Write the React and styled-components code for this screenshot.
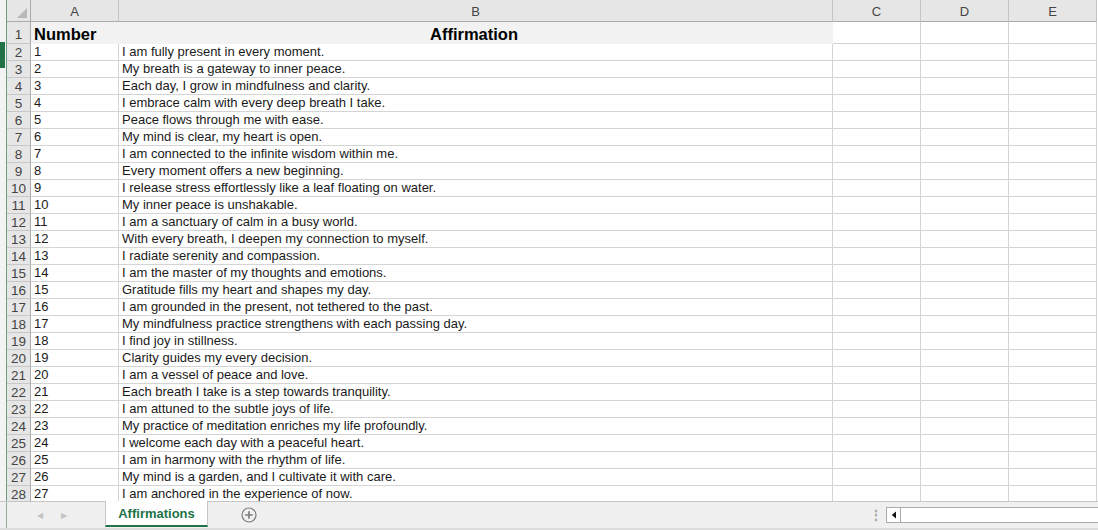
import styled, { createGlobalStyle } from 'styled-components';

const AFFIRMATIONS = [
  'I am fully present in every moment.',
  'My breath is a gateway to inner peace.',
  'Each day, I grow in mindfulness and clarity.',
  'I embrace calm with every deep breath I take.',
  'Peace flows through me with ease.',
  'My mind is clear, my heart is open.',
  'I am connected to the infinite wisdom within me.',
  'Every moment offers a new beginning.',
  'I release stress effortlessly like a leaf floating on water.',
  'My inner peace is unshakable.',
  'I am a sanctuary of calm in a busy world.',
  'With every breath, I deepen my connection to myself.',
  'I radiate serenity and compassion.',
  'I am the master of my thoughts and emotions.',
  'Gratitude fills my heart and shapes my day.',
  'I am grounded in the present, not tethered to the past.',
  'My mindfulness practice strengthens with each passing day.',
  'I find joy in stillness.',
  'Clarity guides my every decision.',
  'I am a vessel of peace and love.',
  'Each breath I take is a step towards tranquility.',
  'I am attuned to the subtle joys of life.',
  'My practice of meditation enriches my life profoundly.',
  'I welcome each day with a peaceful heart.',
  'I am in harmony with the rhythm of life.',
  'My mind is a garden, and I cultivate it with care.',
  'I am anchored in the experience of now.',
];

const COLUMNS = ['A', 'B', 'C', 'D', 'E'];
const GRID_COLUMNS = '24px 88px 714px 88px 88px 88px';

const GlobalStyle = createGlobalStyle`
  html, body {
    margin: 0;
    padding: 0;
    background: #ffffff;
    overflow: hidden;
  }
  body {
    font-family: 'Liberation Sans', Arial, sans-serif;
  }
`;

function App() {
  return (
    <>
      <GlobalStyle />
      <Window>
        <Body>
          <Strip>
            <StripBlock />
          </Strip>
          <Sheet>
            <Corner>
              <CornerTriangle />
            </Corner>
            {COLUMNS.map((letter) => (
              <ColumnHeader key={letter}>{letter}</ColumnHeader>
            ))}

            <RowHeader $tall>1</RowHeader>
            <Cell $tall $filled>
              <Title>Number</Title>
            </Cell>
            <Cell $tall $filled $center>
              <Title>Affirmation</Title>
            </Cell>
            <Cell $tall />
            <Cell $tall />
            <Cell $tall />

            {AFFIRMATIONS.map((text, i) => (
              <Row key={text}>
                <RowHeader>{i + 2}</RowHeader>
                <Cell>{i + 1}</Cell>
                <Cell>{text}</Cell>
                <Cell />
                <Cell />
                <Cell />
              </Row>
            ))}
          </Sheet>
        </Body>

        <TabBar>
          <TabStrip />
          <NavArrows>
            <Arrow>◀</Arrow>
            <Arrow>▶</Arrow>
          </NavArrows>
          <Tab>Affirmations</Tab>
          <AddSheet>
            <svg width="16" height="16" viewBox="0 0 16 16">
              <circle cx="8" cy="8" r="7" fill="none" stroke="#7a7a7a" strokeWidth="1.2" />
              <path d="M8 4.2v7.6M4.2 8h7.6" stroke="#7a7a7a" strokeWidth="1.6" />
            </svg>
          </AddSheet>
          <Spacer />
          <Grip>⋮</Grip>
          <HScroll>
            <ScrollButton>
              <svg width="6" height="8" viewBox="0 0 6 8">
                <path d="M5 0.5v7L0.8 4z" fill="#111" />
              </svg>
            </ScrollButton>
          </HScroll>
        </TabBar>
      </Window>
    </>
  );
}

const Window = styled.div`
  display: flex;
  flex-direction: column;
  width: 1098px;
  height: 530px;
  overflow: hidden;
`;

const Body = styled.div`
  display: flex;
  height: 501px;
  overflow: hidden;
`;

const Strip = styled.div`
  display: flex;
  flex-direction: column;
  width: 6px;
  flex-shrink: 0;
  padding-top: 42px;
  background: #f3f3f3;
  border-right: 1px solid #6f9c80;
`;

const StripBlock = styled.div`
  width: 5px;
  height: 26px;
  background: #217346;
`;

const Sheet = styled.div`
  display: grid;
  grid-template-columns: ${GRID_COLUMNS};
  grid-auto-rows: 17px;
  grid-template-rows: 22px 22px;
  align-content: start;
`;

const Row = styled.div`
  display: contents;
`;

const HeaderBase = styled.div`
  box-sizing: border-box;
  display: flex;
  align-items: center;
  justify-content: center;
  background: #e6e6e6;
  color: #444444;
  font-size: 13px;
`;

const Corner = styled(HeaderBase)`
  position: relative;
  border-right: 1px solid #ababab;
  border-bottom: 1px solid #ababab;
`;

const CornerTriangle = styled.div`
  position: absolute;
  right: 3px;
  bottom: 3px;
  width: 0;
  height: 0;
  border-left: 10px solid transparent;
  border-bottom: 10px solid #b8b8b8;
`;

const ColumnHeader = styled(HeaderBase)`
  border-right: 1px solid #c4c4c4;
  border-bottom: 1px solid #ababab;
  padding-top: 1px;
`;

const RowHeader = styled(HeaderBase)`
  border-right: 1px solid #ababab;
  border-bottom: 1px solid #c8c8c8;
  height: ${(p) => (p.$tall ? 22 : 17)}px;
  font-size: 13.5px;
  padding-top: ${(p) => (p.$tall ? 3 : 1)}px;
`;

const Cell = styled.div`
  box-sizing: border-box;
  display: flex;
  align-items: ${(p) => (p.$tall ? 'center' : 'flex-end')};
  justify-content: ${(p) => (p.$center ? 'center' : 'flex-start')};
  height: ${(p) => (p.$tall ? 22 : 17)}px;
  padding: 0 3px 0 ${(p) => (p.$center ? 0 : 3)}px;
  border-right: 1px solid #d4d4d4;
  border-bottom: 1px solid #d4d4d4;
  background: ${(p) => (p.$filled ? '#f2f2f2' : '#ffffff')};
  ${(p) => p.$filled && 'border-right-color: #f2f2f2; border-bottom-color: #f2f2f2;'}
  color: #1a1a1a;
  font-size: 13px;
  line-height: 16px;
  white-space: nowrap;
  overflow: hidden;
`;

const Title = styled.span`
  font-size: 16.5px;
  font-weight: bold;
  color: #000000;
  padding-top: 2px;
`;

const TabBar = styled.div`
  display: flex;
  align-items: stretch;
  height: 29px;
  box-sizing: border-box;
  background: #f0f0f0;
  border-top: 1px solid #c6c6c6;
  border-bottom: 2px solid #dcdcdc;
`;

const TabStrip = styled.div`
  width: 6px;
  flex-shrink: 0;
  border-right: 1px solid #8fae9a;
`;

const NavArrows = styled.div`
  display: flex;
  align-items: center;
  gap: 18px;
  width: 98px;
  padding-left: 30px;
  box-sizing: border-box;
  color: #c3c3c3;
  font-size: 8px;
`;

const Arrow = styled.span`
  display: inline-block;
`;

const Tab = styled.div`
  display: flex;
  align-items: center;
  justify-content: center;
  width: 103px;
  margin-top: -1px;
  margin-bottom: 1px;
  box-sizing: border-box;
  background: #ffffff;
  border-left: 1px solid #c6c6c6;
  border-right: 1px solid #c6c6c6;
  border-bottom: 2px solid #217346;
  color: #217346;
  font-size: 13px;
  font-weight: bold;
  padding-top: 1px;
`;

const AddSheet = styled.div`
  display: flex;
  align-items: center;
  padding-left: 33px;
`;

const Spacer = styled.div`
  flex: 1;
`;

const Grip = styled.div`
  display: flex;
  align-items: center;
  width: 17px;
  color: #a8a8a8;
  font-size: 14px;
  font-weight: bold;
`;

const HScroll = styled.div`
  display: flex;
  align-self: center;
  width: 212px;
  height: 16px;
  box-sizing: border-box;
  background: #ffffff;
  border: 1px solid #ababab;
  border-right: none;
`;

const ScrollButton = styled.div`
  display: flex;
  align-items: center;
  justify-content: center;
  width: 13px;
  border-right: 1px solid #ababab;
`;

export default App;
